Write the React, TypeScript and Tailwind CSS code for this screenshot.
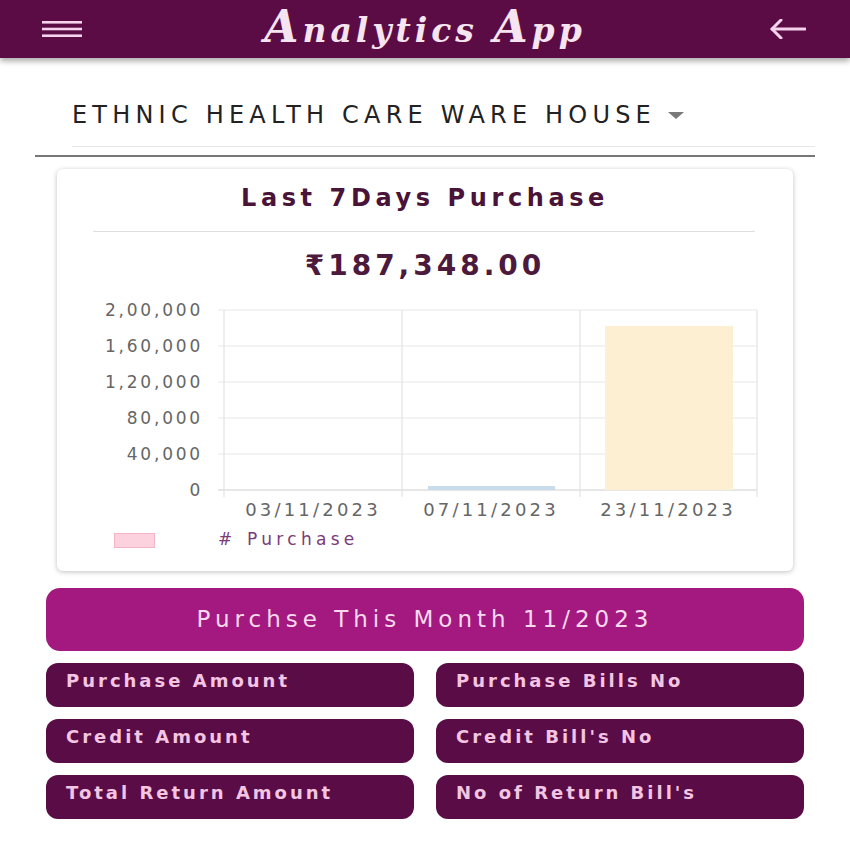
import React from "react";

const yTicks = [
  { label: "2,00,000", y: 14 },
  { label: "1,60,000", y: 50 },
  { label: "1,20,000", y: 86 },
  { label: "80,000", y: 122 },
  { label: "40,000", y: 158 },
  { label: "0", y: 194 },
];

const xLabels = [
  { label: "03/11/2023", x: 256 },
  { label: "07/11/2023", x: 434 },
  { label: "23/11/2023", x: 611 },
];

const tiles = [
  "Purchase Amount",
  "Purchase Bills No",
  "Credit Amount",
  "Credit Bill's No",
  "Total Return Amount",
  "No of Return Bill's",
];

const Header = () => (
  <header className="relative z-10 grid h-[58px] grid-cols-[1fr_auto_1fr] items-center bg-[#5b0c45] px-[42px] shadow-[0_3px_6px_rgba(0,0,0,0.35)]">
    <svg width="40" height="16" viewBox="0 0 40 16" className="text-[#f6d3ec]">
      <rect x="0" y="0" width="40" height="2.6" fill="currentColor" />
      <rect x="0" y="6.7" width="40" height="2.6" fill="currentColor" />
      <rect x="0" y="13.4" width="40" height="2.6" fill="currentColor" />
    </svg>
    <h1 className="pb-[4px] font-['DejaVu_Serif',serif] text-[33px] font-bold italic leading-none tracking-[4px] text-[#f7e4f1]">
      <span className="text-[44px]">A</span>nalytics <span className="text-[44px]">A</span>pp
    </h1>
    <div className="flex justify-end pr-[2px]">
      <svg width="36" height="20" viewBox="0 0 36 20" fill="none" stroke="#f6d3ec" strokeWidth="3" strokeLinecap="round" strokeLinejoin="round">
        <path d="M35 10H2" />
        <path d="M11 1L2 10L11 19" />
      </svg>
    </div>
  </header>
);

const Chart = () => (
  <svg width="736" height="262" viewBox="0 0 736 262" className="block font-['DejaVu_Sans',sans-serif]">
    {yTicks.map((t) => (
      <line key={t.label} x1="161" x2="700" y1={t.y} y2={t.y} stroke={t.label === "0" ? "#cfcfcf" : "#e7e7e7"} strokeWidth="1.2" />
    ))}
    {[167, 345, 523, 700].map((x) => (
      <line key={x} x1={x} x2={x} y1="14" y2="201" stroke="#e3e3e3" strokeWidth="1.2" />
    ))}
    <rect x="371" y="190" width="127" height="4" fill="#c9dcec" />
    <rect x="548" y="30" width="128" height="164" fill="#fdefd1" />
    {yTicks.map((t) => (
      <text key={t.label} x="146" y={t.y + 6} textAnchor="end" fontSize="17" letterSpacing="2.8" fill="#666">
        {t.label}
      </text>
    ))}
    {xLabels.map((l) => (
      <text key={l.label} x={l.x} y="220" textAnchor="middle" fontSize="18" letterSpacing="3.2" fill="#666">
        {l.label}
      </text>
    ))}
    <rect x="57.5" y="237.5" width="40" height="14" fill="#fcd2de" stroke="#f4b3c6" />
    <text x="161" y="249" fontSize="17" letterSpacing="3.2" fill="#7b3b78">
      #
    </text>
    <text x="190" y="249" fontSize="17" letterSpacing="4.3" fill="#7b3b78">
      Purchase
    </text>
  </svg>
);

export default function App() {
  return (
    <div className="min-h-[850px] w-[850px] bg-white pb-8 font-['DejaVu_Sans',sans-serif]">
      <Header />

      <div className="flex items-center pl-[72px] pt-[43px]">
        <span className="text-[24px] leading-[28px] tracking-[5.2px] text-[#222]">ETHNIC HEALTH CARE WARE HOUSE</span>
        <span className="ml-[12px] h-0 w-0 border-x-[8px] border-t-[7px] border-x-transparent border-t-[#7a7a7a]" />
      </div>
      <div className="ml-[72px] mr-[35px] mt-[17px] h-px bg-[#e6e6e6]" />
      <div className="mx-[35px] mt-[8px] h-[2px] bg-[#777]" />

      <section className="mx-[57px] mt-[12px] h-[402px] rounded-[6px] bg-white shadow-[0_1px_5px_rgba(0,0,0,0.25)]">
        <h2 className="pt-[15px] text-center text-[24px] font-bold leading-[28px] tracking-[4.6px] text-[#4a1338]">
          Last 7Days Purchase
        </h2>
        <div className="ml-[36px] mr-[38px] mt-[19px] h-px bg-[#dedede]" />
        <p className="mt-[18px] text-center text-[28px] font-bold leading-[32px] tracking-[4px] text-[#4b1a3c]">
          ₹187,348.00
        </p>
        <div className="mt-[14px]">
          <Chart />
        </div>
      </section>

      <div className="mx-[46px] mt-[17px] flex h-[63px] items-center justify-center rounded-[14px] bg-[#a3197f]">
        <span className="text-[23px] tracking-[5px] text-[#f7d9ee]">Purchse This Month 11/2023</span>
      </div>

      <div className="mx-[46px] mt-[12px] grid grid-cols-2 gap-x-[22px] gap-y-[12px]">
        {tiles.map((t) => (
          <div key={t} className="flex h-[44px] items-center rounded-[12px] bg-[#590c45] pb-[10px] pl-[20px]">
            <span className="text-[18px] font-bold tracking-[3px] text-[#f3c5e2]">{t}</span>
          </div>
        ))}
      </div>
    </div>
  );
}
